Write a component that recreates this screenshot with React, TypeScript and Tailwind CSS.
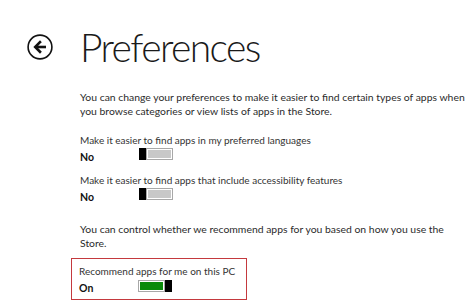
import React from "react";

function Toggle({ on }: { on: boolean }) {
  if (on) {
    return (
      <div className="flex h-[12px] w-[34px] items-stretch">
        <div className="flex-1 border border-[#a8a8a8] bg-white p-[1px]">
          <div className="h-full w-full bg-[#0a8a0a]" />
        </div>
        <div className="w-[7px] bg-black" />
      </div>
    );
  }
  return (
    <div className="flex h-[12px] w-[34px] items-stretch">
      <div className="w-[7px] bg-black" />
      <div className="flex-1 border border-[#a8a8a8] bg-white p-[1px]">
        <div className="h-full w-full bg-[#c8c8c8]" />
      </div>
    </div>
  );
}

function Setting({ label, value, on }: { label: string; value: string; on: boolean }) {
  return (
    <div>
      <div className="text-[10px] leading-[12px] text-[#333333]">{label}</div>
      <div className="mt-[4px] flex items-start">
        <span className="w-[59px] text-[10.5px] font-bold leading-[14px] text-[#111111]">{value}</span>
        <div className={on ? "-mt-[1px]" : "-mt-[2px]"}>
          <Toggle on={on} />
        </div>
      </div>
    </div>
  );
}

export default function App() {
  return (
    <div
      className="h-[304px] w-[468px] overflow-hidden whitespace-nowrap bg-white"
      style={{ fontFamily: 'Lato, "Open Sans", sans-serif' }}
    >
      <div className="flex items-center pl-[27px] pt-[26px]">
        <svg width="26" height="26" viewBox="0 0 26 26" className="shrink-0">
          <circle cx="13" cy="13" r="11.9" fill="none" stroke="#111" strokeWidth="1.6" />
          <path d="M19 13H8.5" stroke="#111" strokeWidth="2.6" fill="none" />
          <path d="M13 8.2L8.2 13L13 17.8" stroke="#111" strokeWidth="2.6" fill="none" strokeLinecap="square" />
        </svg>
        <h1 className="ml-[27px] text-[39px] font-light leading-[42px] tracking-[-1.6px] text-[#1a1a1a]">
          Preferences
        </h1>
      </div>

      <div className="pl-[80px] pt-[22px]">
        <p className="text-[10.4px] leading-[14px] text-[#2b2b2b]">
          You can change your preferences to make it easier to find certain types of apps when
          <br />
          you browse categories or view lists of apps in the Store.
        </p>
        <div className="mt-[16px]">
          <Setting label="Make it easier to find apps in my preferred languages" value="No" on={false} />
        </div>
        <div className="mt-[10px]">
          <Setting label="Make it easier to find apps that include accessibility features" value="No" on={false} />
        </div>
        <p className="mt-[18px] text-[10.4px] leading-[14px] text-[#2b2b2b]">
          You can control whether we recommend apps for you based on how you use the
          <br />
          Store.
        </p>
      </div>
      <div className="ml-[71px] mt-[8px] w-[176px] border border-[#c4393e] pb-[4px] pl-[7px] pt-[6px]">
        <Setting label="Recommend apps for me on this PC" value="On" on={true} />
      </div>
    </div>
  );
}
